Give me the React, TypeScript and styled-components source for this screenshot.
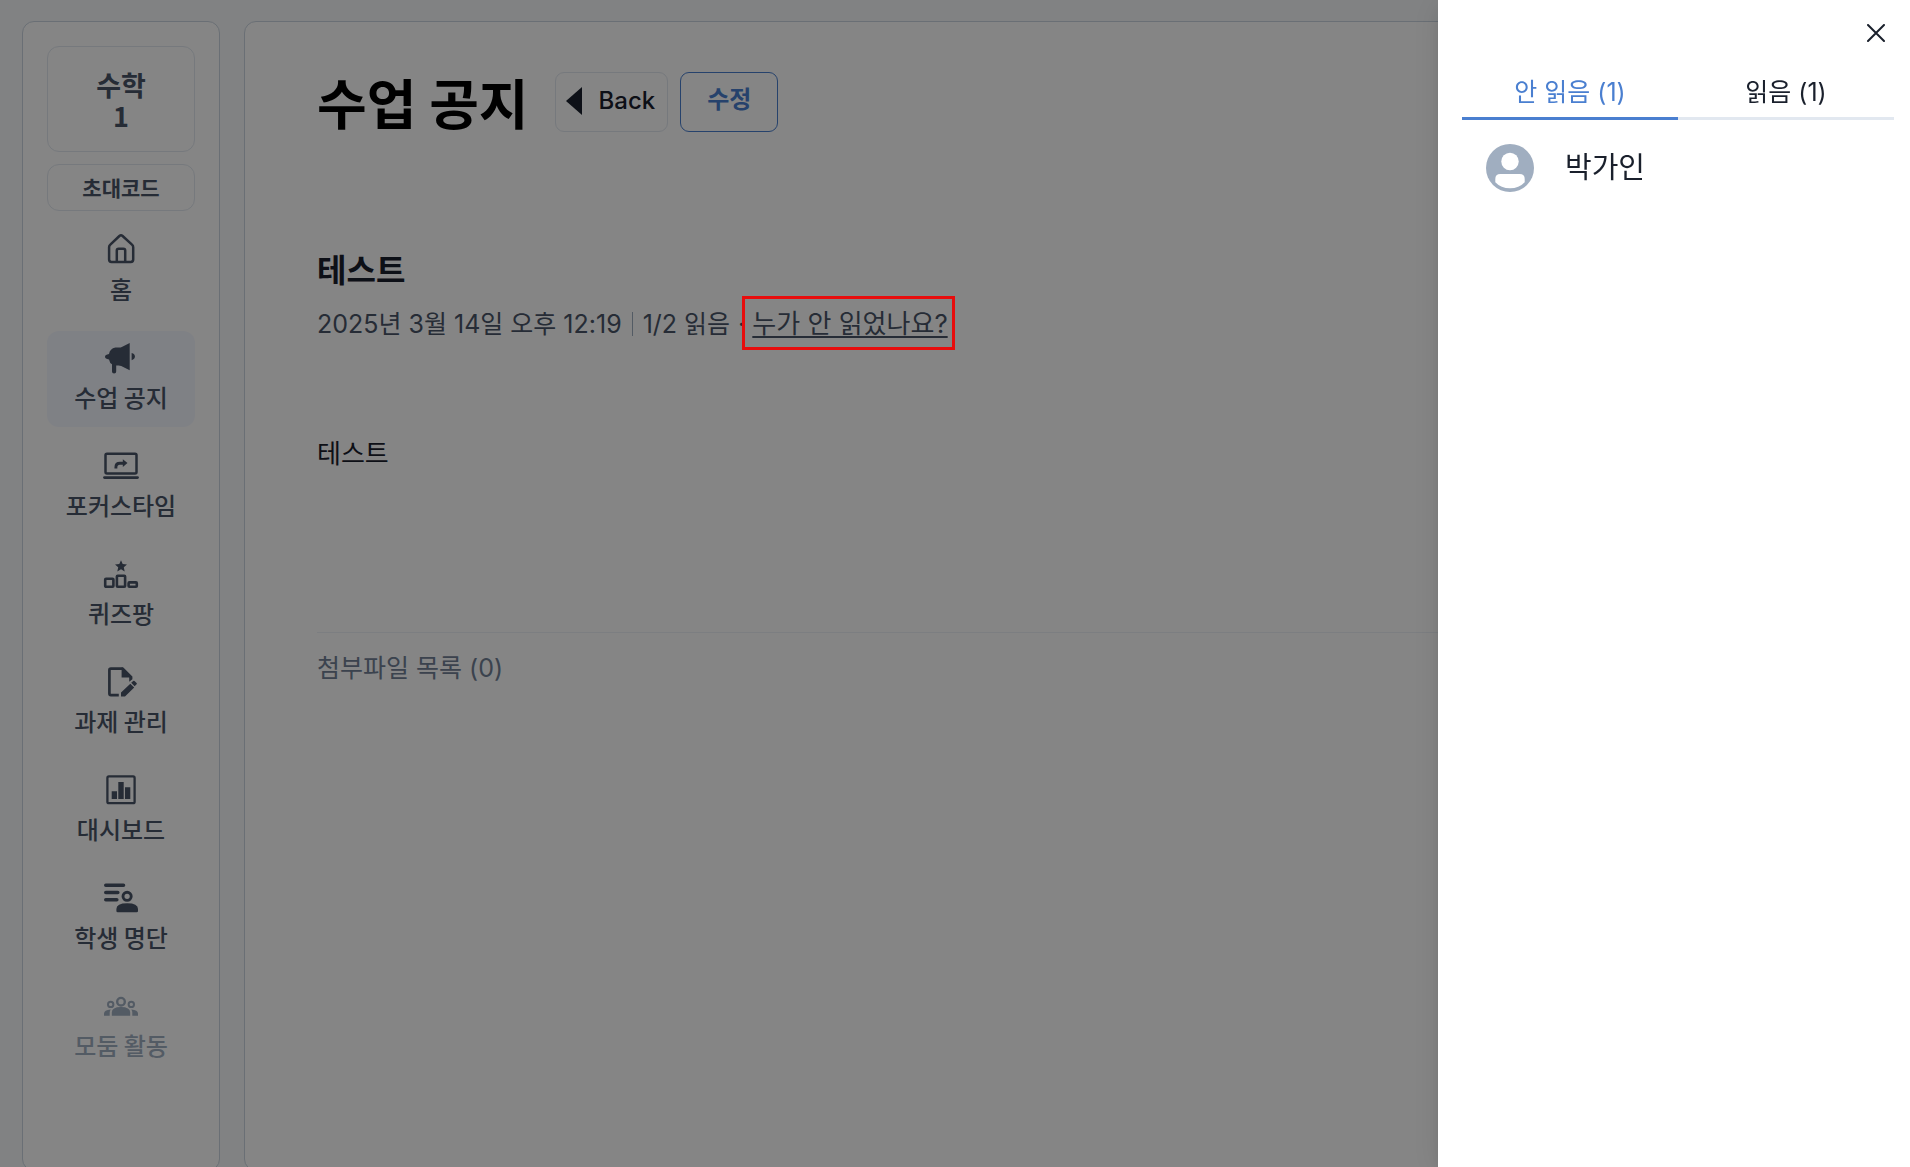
import React, { useState } from 'react';
import styled, { createGlobalStyle } from 'styled-components';

const color = {
  page: '#f7fafc',
  line: '#cbd5e0',
  softLine: '#e2e8f0',
  text: '#1a202c',
  muted: '#4a5568',
  faint: '#718096',
  disabled: '#a0aec0',
  active: '#f4f7ff',
  primary: '#4a7fd0',
};

const GlobalStyle = createGlobalStyle`
  *, *::before, *::after { box-sizing: border-box; }
  body {
    margin: 0;
    background: ${color.page};
    color: ${color.text};
    font-family: Inter, 'Noto Sans CJK KR', sans-serif;
    font-size: 25px;
    line-height: 36px;
  }
  button { font: inherit; color: inherit; cursor: pointer; }
  h1, h2, p, ul { margin: 0; padding: 0; }
`;

const Page = styled.div`
  display: flex;
  gap: 24px;
  height: 100vh;
  padding: 21px 22px 0;
  overflow: hidden;
`;

const Sidebar = styled.aside`
  flex: none;
  display: flex;
  flex-direction: column;
  gap: 12px;
  width: 198px;
  padding: 24px;
  margin-bottom: -4px;
  background: #fff;
  border: 1px solid ${color.line};
  border-radius: 12px;
  color: ${color.muted};
  font-family: 'Noto Sans CJK KR', sans-serif;
`;

const ClassCard = styled.div`
  display: flex;
  align-items: center;
  justify-content: center;
  height: 106px;
  padding-top: 1px;
  border: 1px solid ${color.softLine};
  border-radius: 12px;
  font-size: 27px;
  font-weight: 700;
  line-height: 31px;
  text-align: center;
  white-space: pre-line;
`;

const InviteButton = styled.button`
  height: 47px;
  padding: 0 0 2px;
  background: transparent;
  border: 1px solid ${color.softLine};
  border-radius: 12px;
  font-size: 21px;
  font-weight: 700;
  line-height: 32px;
`;

const Nav = styled.nav`
  display: flex;
  flex-direction: column;
  gap: 12px;
`;

const NavItem = styled.button<{ $active?: boolean }>`
  display: flex;
  flex-direction: column;
  align-items: center;
  gap: 3px;
  height: 96px;
  padding: 9px 0;
  background: ${(p) => (p.$active ? color.active : 'transparent')};
  border: 0;
  border-radius: 12px;
  font-size: 24px;
  font-weight: 500;
  white-space: nowrap;
  &:disabled { color: ${color.disabled}; cursor: default; }
`;

const Icon = styled.svg`
  flex: none;
  width: 36px;
  height: 36px;
`;

const Main = styled.main`
  flex: 1;
  min-width: 0;
  padding: 50px 72px;
  margin-bottom: -4px;
  background: #fff;
  border: 1px solid ${color.line};
  border-radius: 12px;
`;

const Header = styled.header`
  display: flex;
  align-items: center;
  gap: 12px;
  height: 60px;
`;

const Title = styled.h1`
  padding-top: 8px;
  margin-right: 14px;
  color: #000;
  font-size: 54px;
  font-weight: 700;
  line-height: 60px;
`;

const HeaderButton = styled.button<{ $primary?: boolean }>`
  display: flex;
  align-items: center;
  gap: 17px;
  height: 60px;
  padding: ${(p) => (p.$primary ? '0 26px 4px' : '0 12px 2px 10px')};
  background: transparent;
  border: 1px solid ${(p) => (p.$primary ? color.primary : color.softLine)};
  border-radius: 9px;
  color: ${(p) => (p.$primary ? color.primary : color.text)};
  font-size: 24px;
  font-weight: ${(p) => (p.$primary ? 700 : 500)};
`;

const BackArrow = styled.svg`
  width: 16px;
  height: 28px;
`;

const NoticeTitle = styled.h2`
  margin-top: 121px;
  font-size: 32px;
  font-weight: 700;
  line-height: 36px;
`;

const Meta = styled.div`
  display: flex;
  align-items: center;
  margin-top: 17px;
  color: ${color.muted};
  white-space: nowrap;
`;

const MetaDivider = styled.span`
  width: 1px;
  height: 24px;
  margin: 0 10px;
  background: ${color.disabled};
`;

const Dot = styled.span`
  margin: 0 7px 0 8px;
`;

const UnreadLink = styled.a`
  position: relative;
  color: inherit;
  font-size: 26px;
  text-decoration: underline;
  text-decoration-thickness: 2px;
  text-underline-offset: 3px;
  &::after {
    content: '';
    position: absolute;
    inset: -10px -7px -8px -10px;
    z-index: 3;
    border: 3px solid #e80c0c;
  }
`;

const NoticeBody = styled.p`
  min-height: 196px;
  margin-top: 94px;
  font-size: 26px;
`;

const Attachments = styled.section`
  padding-top: 17px;
  border-top: 1px solid #edf2f7;
  color: ${color.faint};
`;

const Overlay = styled.div`
  position: fixed;
  inset: 0;
  z-index: 2;
  background: rgba(0, 0, 0, 0.48);
`;

const Drawer = styled.aside`
  position: fixed;
  top: 0;
  right: 0;
  bottom: 0;
  z-index: 4;
  display: flex;
  flex-direction: column;
  width: 472px;
  padding: 12px 16px 0 24px;
  background: #fff;
  box-shadow: 0 10px 15px -3px rgba(0, 0, 0, 0.1), 0 4px 30px rgba(0, 0, 0, 0.1);
`;

const CloseButton = styled.button`
  align-self: flex-end;
  display: flex;
  align-items: center;
  justify-content: center;
  width: 36px;
  height: 42px;
  padding: 0;
  background: transparent;
  border: 0;
`;

const TabList = styled.div`
  display: flex;
  margin-top: 12px;
`;

const Tab = styled.button<{ $active: boolean }>`
  flex: 1;
  height: 54px;
  padding: 0;
  background: transparent;
  border: 0;
  border-bottom: 3px solid ${(p) => (p.$active ? color.primary : color.softLine)};
  color: ${(p) => (p.$active ? color.primary : color.text)};
`;

const StudentList = styled.ul`
  padding: 24px;
  list-style: none;
`;

const Student = styled.li`
  display: flex;
  align-items: center;
  gap: 31px;
  font-size: 29px;
`;

const Avatar = styled.svg`
  width: 48px;
  height: 48px;
`;

const HomeIcon = () => (
  <Icon viewBox="0 0 36 36" fill="none" stroke="currentColor" strokeWidth="2.5" strokeLinejoin="round">
    <path d="M6.1 15.2q0-1.6 1.2-2.6L16.4 4q1.6-1.4 3.2 0l9.4 8.6q1.2 1 1.2 2.6V27.5q0 2.4-2.4 2.4H8.5q-2.4 0-2.4-2.4z" />
    <path d="M13.8 29.8V18.6q0-1.8 1.8-1.8h4.8q1.8 0 1.8 1.8v11.2" />
  </Icon>
);

const MegaphoneIcon = () => (
  <Icon viewBox="0 0 36 36" fill="currentColor">
    <path d="M26.7 3v27.2l-8.5-4.1q-1.2-.5-2.6-.5h-2.4v6q0 1.9-2.1 1.9t-2.1-1.9v-7.4q-2.3-1-3-4.7Q2 19 2 16.8T6 14q.9-5.2 6.4-6.4l4-.1q1.2 0 2.4-.6z" />
    <path d="M28.6 13q3.3.8 3.3 3.6t-3.3 3.6z" />
  </Icon>
);

const FocusIcon = () => (
  <Icon viewBox="0 0 36 36" fill="none" stroke="currentColor">
    <rect x="2.5" y="5.8" width="31" height="19.6" rx="1.5" strokeWidth="2.5" />
    <path d="M1.5 29.6h33" strokeWidth="2.8" strokeLinecap="round" />
    <path d="M12.9 20.6v-1.4q0-4 4-4h4" strokeWidth="2.9" />
    <path d="M19.8 11.2l4.7 3.8-4.7 3.9z" fill="currentColor" stroke="none" />
  </Icon>
);

const QuizIcon = () => (
  <Icon viewBox="0 0 36 36" fill="none" stroke="currentColor" strokeWidth="2.6">
    <path
      d="M18 4.2l1.7 3.9 4.3.4-3.2 2.8.9 4.3L18 13.3l-3.7 2.3.9-4.3L12 8.5l4.3-.4z"
      fill="currentColor"
      stroke="none"
    />
    <rect x="2.2" y="22.8" width="8.2" height="8" rx=".8" />
    <rect x="13.9" y="19.8" width="8.2" height="11" rx=".8" />
    <rect x="25.6" y="26.4" width="8.2" height="4.4" rx=".8" />
  </Icon>
);

const TaskIcon = () => (
  <Icon viewBox="0 0 36 36" fill="currentColor">
    <path
      d="M15.8 31.1H7.9q-1.5 0-1.5-1.5V6.2q0-1.5 1.5-1.5h12"
      fill="none"
      stroke="currentColor"
      strokeWidth="2.7"
    />
    <path d="M18.6 3.4h1.8l9 9.2v2.6l-3.2 2.6v-4.2h-7.6z" />
    <path d="M18 32.4v-3.9l9.3-8.7 3.9 3.8-9.2 8.8zM28.2 18.8l2-1.9q.7-.5 1.3.1l2.1 2.1q.6.6 0 1.2l-2 2z" />
  </Icon>
);

const DashboardIcon = () => (
  <Icon viewBox="0 0 36 36" fill="currentColor">
    <rect x="4.4" y="4.4" width="27.2" height="26.8" rx="1.5" fill="none" stroke="currentColor" strokeWidth="2.3" />
    <path d="M8.7 19.3H14V27H8.7zM15.3 10h5.4v17h-5.4zM22 15.3h5.3V27H22z" />
  </Icon>
);

const StudentsIcon = () => (
  <Icon viewBox="0 0 36 36" fill="currentColor">
    <path d="M2.8 5.2h17.7M2.8 12.5h12M2.8 19.7h11" fill="none" stroke="currentColor" strokeWidth="3.6" strokeLinecap="round" />
    <circle cx="24.1" cy="16.3" r="4.1" fill="none" stroke="currentColor" strokeWidth="2.9" />
    <path d="M13.4 29q0-5.8 10.8-5.8T35 29v2q0 1.3-1.3 1.3h-19q-1.3 0-1.3-1.3z" />
  </Icon>
);

const GroupsIcon = () => (
  <Icon viewBox="0 0 36 36" fill="currentColor">
    <g fill="none" stroke="currentColor">
      <circle cx="18" cy="13.7" r="3.8" strokeWidth="2.4" />
      <circle cx="7.7" cy="16.4" r="2.7" strokeWidth="2" />
      <circle cx="28.3" cy="16.4" r="2.7" strokeWidth="2" />
    </g>
    <path d="M8.8 27.7v-3.1q0-5.5 9.2-5.5t9.2 5.5v3.1zM1 27.7v-2q0-3.8 6.7-4.3-1 1.3-1 3.2v3.1zM35 27.7v-2q0-3.8-6.7-4.3 1 1.3 1 3.2v3.1z" />
  </Icon>
);

const menu = [
  { label: '홈', icon: HomeIcon },
  { label: '수업 공지', icon: MegaphoneIcon, active: true },
  { label: '포커스타임', icon: FocusIcon },
  { label: '퀴즈팡', icon: QuizIcon },
  { label: '과제 관리', icon: TaskIcon },
  { label: '대시보드', icon: DashboardIcon },
  { label: '학생 명단', icon: StudentsIcon },
  { label: '모둠 활동', icon: GroupsIcon, disabled: true },
];

const tabs = ['안 읽음 (1)', '읽음 (1)'];

export default function App() {
  const [tab, setTab] = useState(0);

  return (
    <>
      <GlobalStyle />
      <Page>
        <Sidebar>
          <ClassCard>{'수학\n1'}</ClassCard>
          <InviteButton type="button">초대코드</InviteButton>
          <Nav>
            {menu.map(({ label, icon: MenuIcon, active, disabled }) => (
              <NavItem key={label} type="button" $active={active} disabled={disabled}>
                <MenuIcon />
                {label}
              </NavItem>
            ))}
          </Nav>
        </Sidebar>
        <Main>
          <Header>
            <Title>수업 공지</Title>
            <HeaderButton type="button">
              <BackArrow viewBox="0 0 16 28" fill="currentColor" aria-hidden="true">
                <path d="M16 0v28L0 14z" />
              </BackArrow>
              Back
            </HeaderButton>
            <HeaderButton type="button" $primary>수정</HeaderButton>
          </Header>
          <NoticeTitle>테스트</NoticeTitle>
          <Meta>
            <span>2025년 3월 14일 오후 12:19</span>
            <MetaDivider />
            <span>1/2 읽음</span>
            <Dot>·</Dot>
            <UnreadLink href="#unread">누가 안 읽었나요?</UnreadLink>
          </Meta>
          <NoticeBody>테스트</NoticeBody>
          <Attachments>첨부파일 목록 (0)</Attachments>
        </Main>
      </Page>
      <Overlay />
      <Drawer role="dialog" aria-label="읽음 현황">
        <CloseButton type="button" aria-label="닫기">
          <svg width="18" height="18" viewBox="0 0 18 18" fill="none" stroke="currentColor" strokeWidth="2" strokeLinecap="round">
            <path d="M1 1l16 16M17 1L1 17" />
          </svg>
        </CloseButton>
        <TabList role="tablist">
          {tabs.map((label, i) => (
            <Tab key={label} type="button" role="tab" aria-selected={tab === i} $active={tab === i} onClick={() => setTab(i)}>
              {label}
            </Tab>
          ))}
        </TabList>
        <StudentList>
          <Student>
            <Avatar viewBox="0 0 48 48" aria-hidden="true">
              <circle cx="24" cy="24" r="24" fill={color.disabled} />
              <circle cx="24" cy="17.5" r="8.7" fill="#fff" />
              <path d="M9.3 35q0-5 5-5h19.4q5 0 5 5v3.3q-5.7 6-14.7 6t-14.7-6z" fill="#fff" />
            </Avatar>
            박가인
          </Student>
        </StudentList>
      </Drawer>
    </>
  );
}
